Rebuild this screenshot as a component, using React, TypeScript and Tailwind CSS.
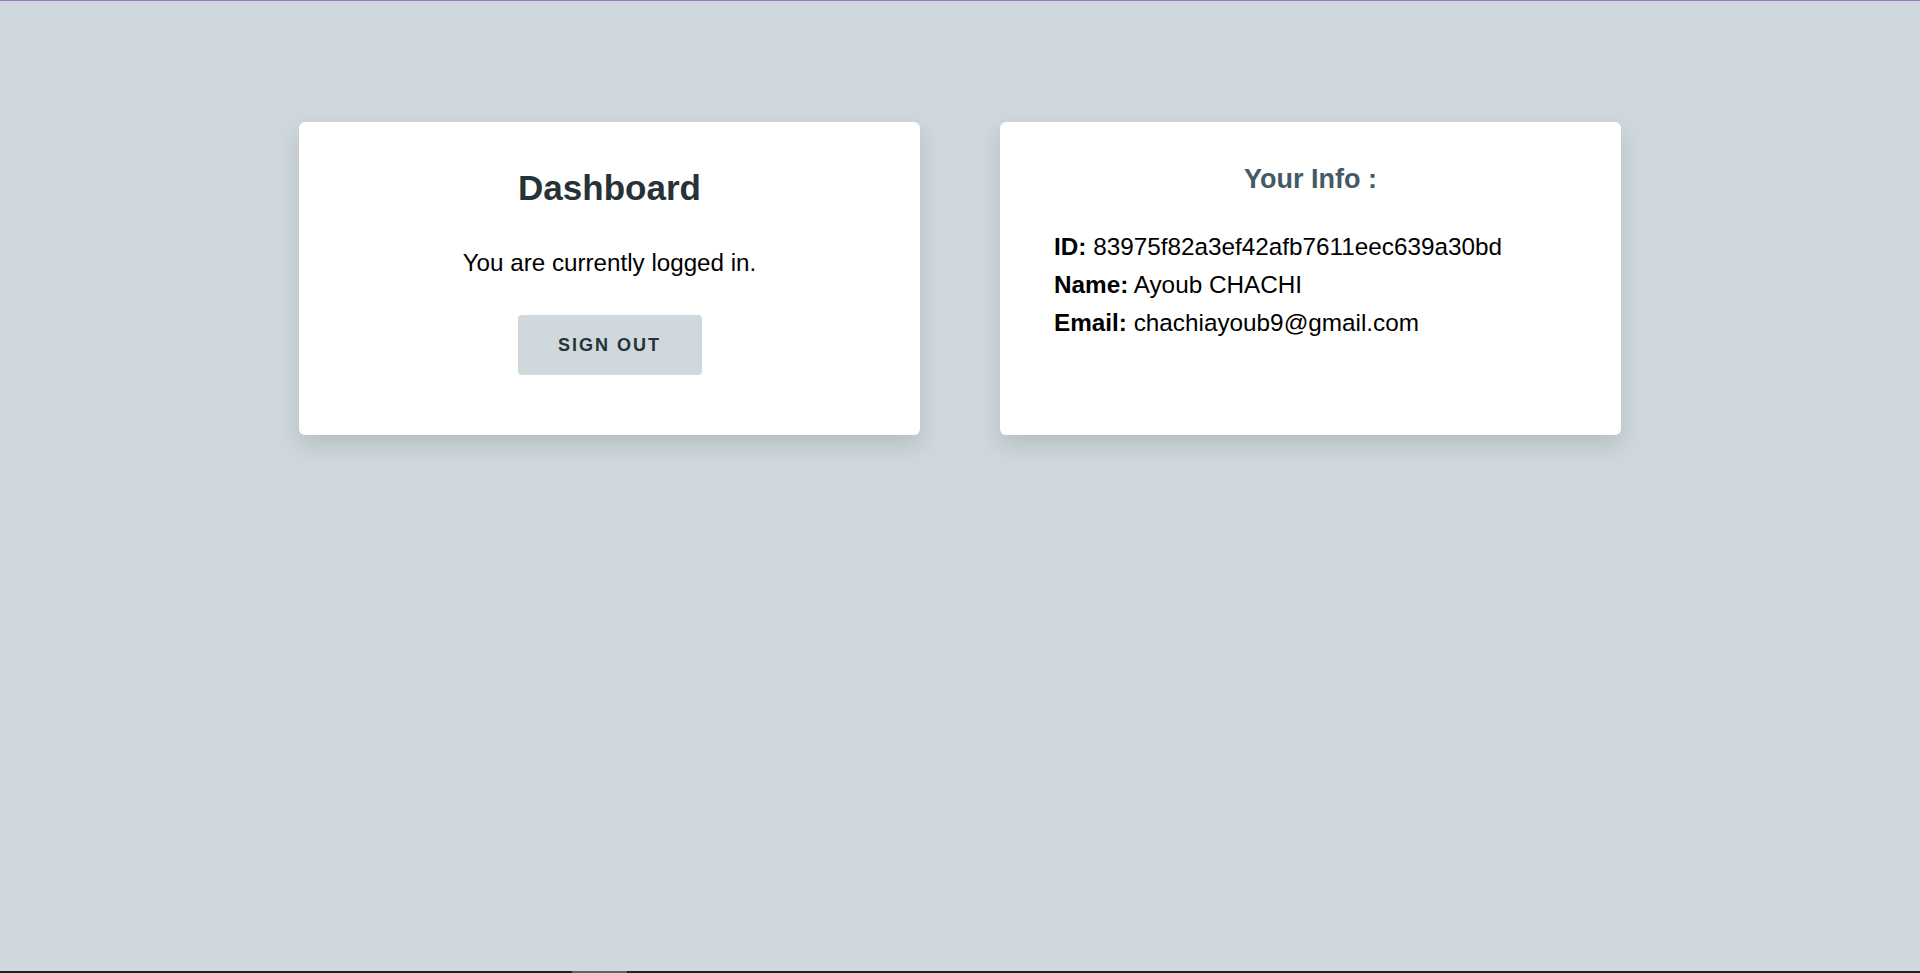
const InfoRow = ({ label, value }: { label: string; value: string }) => (
  <p className="leading-[38px]">
    <span className="font-bold">{label}</span> {value}
  </p>
);

const App = () => {
  return (
    <div
      className="h-[973px] flex flex-col bg-[#cfd8dc] border-t border-[#9575cd] text-black"
      style={{ fontFamily: '"Liberation Sans", Arial, sans-serif' }}
    >
      <main className="flex-1 flex justify-center items-start gap-20 pt-[121px]">
        {/* Dashboard card */}
        <div className="w-[621px] bg-white rounded-md shadow-[0_10px_24px_rgba(0,0,0,0.13)] flex flex-col items-center pt-[45px] pb-[60px]">
          <h1 className="text-[35px] leading-[42px] font-bold text-[#263238]">Dashboard</h1>
          <p className="mt-[39px] text-[24.2px] leading-[29px]">You are currently logged in.</p>
          <button className="mt-[38px] w-[184px] h-[60px] rounded-[4px] bg-[#cfd8dc] text-[#263238] text-[18px] font-bold tracking-[2px]">
            SIGN OUT
          </button>
        </div>

        {/* Info card */}
        <div className="w-[621px] self-stretch max-h-[313px] bg-white rounded-md shadow-[0_10px_24px_rgba(0,0,0,0.13)] pt-[42px] px-[54px]">
          <h2 className="text-center text-[27px] leading-[31px] font-bold text-[#455a64]">Your Info :</h2>
          <div className="mt-[33px] text-[24.3px]">
            <InfoRow label="ID:" value="83975f82a3ef42afb7611eec639a30bd" />
            <InfoRow label="Name:" value="Ayoub CHACHI" />
            <InfoRow label="Email:" value="chachiayoub9@gmail.com" />
          </div>
        </div>
      </main>

      {/* bottom scroll strip */}
      <div className="h-[2px] bg-[#202124] flex">
        <div className="ml-[572px] w-[55px] bg-[#5f6368]" />
      </div>
    </div>
  );
};

export default App;
